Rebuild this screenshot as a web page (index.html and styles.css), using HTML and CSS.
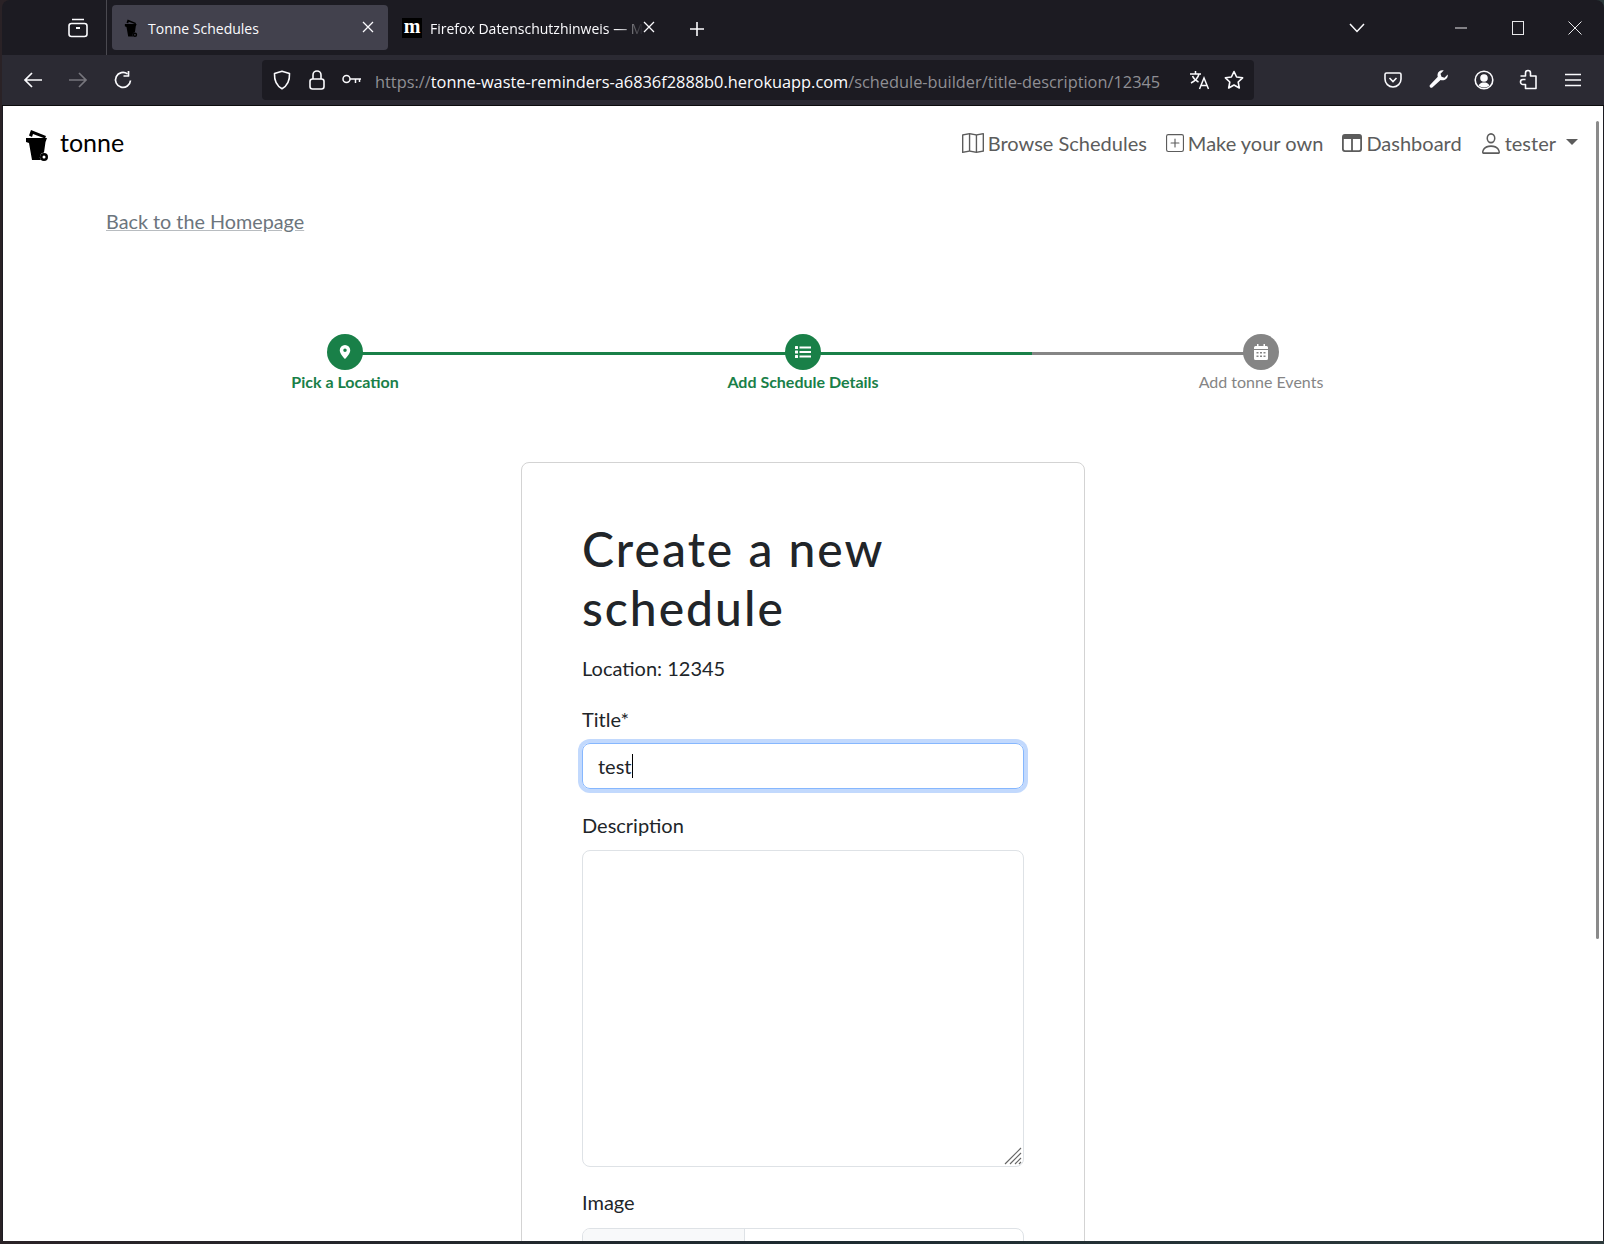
FILE: index.html
```html
<!DOCTYPE html>
<html lang="en">
<head>
  <meta charset="UTF-8">
  <title>Tonne Schedules</title>
  <link rel="stylesheet" href="styles.css">
</head>
<body>

<div class="window">

  <!-- Tab strip -->
  <div class="tabbar">
    <span class="ff-view">
      <svg width="22" height="22" viewBox="0 0 22 22" fill="none" stroke="#fbfbfe" stroke-width="1.6"><rect x="2" y="6.5" width="18" height="13" rx="2.5"/><path d="M5 2.5h12"/><path d="M9 11h4" stroke-width="2"/></svg>
    </span>
    <span class="tab-sep"></span>
    <div class="tab tab-active">
      <svg class="tab-favicon" width="16" height="18" viewBox="0 0 24 32"><use href="#bin"/></svg>
      <span class="tab-title">Tonne Schedules</span>
      <svg class="tab-close" width="12" height="12" viewBox="0 0 12 12" stroke="#fbfbfe" stroke-width="1.3"><path d="M1 1l10 10M11 1L1 11"/></svg>
    </div>
    <div class="tab tab-other">
      <span class="tab-m">m</span>
      <span class="tab-title tab-fade">Firefox Datenschutzhinweis — M</span>
      <svg class="tab-close" width="12" height="12" viewBox="0 0 12 12" stroke="#fbfbfe" stroke-width="1.3"><path d="M1 1l10 10M11 1L1 11"/></svg>
    </div>
    <svg class="new-tab" width="16" height="16" viewBox="0 0 16 16" stroke="#fbfbfe" stroke-width="1.6"><path d="M8 1v14M1 8h14"/></svg>
    <svg class="tab-list" width="16" height="10" viewBox="0 0 16 10" fill="none" stroke="#fbfbfe" stroke-width="1.5"><path d="M1 1l7 7.5L15 1"/></svg>
    <svg class="win-min" width="12" height="2" viewBox="0 0 12 2" stroke="#e8e8ea" stroke-width="1"><path d="M0 1h12"/></svg>
    <svg class="win-max" width="12" height="14" viewBox="0 0 12 14" fill="none" stroke="#e8e8ea" stroke-width="1"><rect x=".5" y=".5" width="11" height="13"/></svg>
    <svg class="win-close" width="14" height="14" viewBox="0 0 14 14" stroke="#e8e8ea" stroke-width="1"><path d="M.5.5l13 13M13.500.5l-13 13"/></svg>
  </div>

  <!-- Toolbar -->
  <div class="toolbar">
    <svg class="tb-back" width="20" height="18" viewBox="0 0 20 18" fill="none" stroke="#fbfbfe" stroke-width="1.7"><path d="M19 9H2M9 2L2 9l7 7"/></svg>
    <svg class="tb-forward" width="20" height="18" viewBox="0 0 20 18" fill="none" stroke="#77767d" stroke-width="1.7"><path d="M1 9h17M11 2l7 7-7 7"/></svg>
    <svg class="tb-reload" width="20" height="20" viewBox="0 0 20 20" fill="none" stroke="#fbfbfe" stroke-width="1.7"><path d="M17.500 10.500a7.500 7.500 0 1 1-3-6.600"/><path d="M15.500 1v5h-5" stroke-linejoin="round"/></svg>

    <div class="urlbar">
      <svg class="ub-shield" width="18" height="20" viewBox="0 0 18 20" fill="none" stroke="#fbfbfe" stroke-width="1.6"><path d="M9 1.200l7.500 2.400c.3 6.600-1.600 11.800-7.500 15.200C3.100 15.400 1.200 10.200 1.500 3.600z" stroke-linejoin="round"/></svg>
      <svg class="ub-lock" width="16" height="20" viewBox="0 0 16 20" fill="none" stroke="#fbfbfe" stroke-width="1.6"><rect x="1" y="9" width="14" height="10" rx="2.500"/><path d="M4 9V5a4 4 0 0 1 8 0v4"/></svg>
      <svg class="ub-key" width="20" height="12" viewBox="0 0 20 12" fill="none" stroke="#fbfbfe" stroke-width="1.500"><circle cx="4.500" cy="5" r="3.500"/><path d="M8 5h11M13.500 5v4M17.500 5v3"/></svg>
      <span class="url"><span class="url-dim">https://</span>tonne-waste-reminders-a6836f2888b0.herokuapp.com<span class="url-dim">/schedule-builder/title-description/12345</span></span>
      <svg class="ub-translate" width="22" height="20" viewBox="0 0 22 20" fill="none" stroke="#fbfbfe" stroke-width="1.500"><path d="M1 4h11M6.500 1v3M10 4c-1 4-4 7-8 9M3.500 6c1 2.500 3 4.500 6 6M10.500 19l4.500-11 4.500 11M12 15.500h6"/></svg>
      <svg class="ub-star" width="20" height="20" viewBox="0 0 20 20" fill="none" stroke="#fbfbfe" stroke-width="1.600"><path d="M10 1.500l2.600 5.500 6 .8-4.400 4.200 1.100 6L10 15l-5.300 3 1.100-6L1.400 7.800l6-.8z" stroke-linejoin="round"/></svg>
    </div>

    <svg class="tb-pocket" width="18" height="18" viewBox="0 0 18 18" fill="none" stroke="#fbfbfe" stroke-width="1.600"><path d="M2.500 2h13A1.500 1.500 0 0 1 17 3.500V8A8 8 0 0 1 1 8V3.500A1.500 1.500 0 0 1 2.500 2z"/><path d="M5.500 7L9 10.500 12.500 7"/></svg>
    <svg class="tb-wrench" width="20" height="20" viewBox="0 0 20 20" fill="#fbfbfe"><path d="M18.700 4.500l-3.200 3.200-3-1-1-3L14.700.5c-2.700-.8-6 1-6.200 4.200 0 .8.100 1.500.3 2.100L1 15c-1.300 1.400.8 3.800 2.300 2.500l8.300-7.500c3.300 1.300 7.900-1.200 7.100-5.500z"/></svg>
    <svg class="tb-account" width="20" height="20" viewBox="0 0 20 20" fill="none" stroke="#fbfbfe" stroke-width="1.600"><circle cx="10" cy="10" r="8.800"/><circle cx="10" cy="8" r="3" fill="#fbfbfe"/><path d="M4.500 15.500c1.500-2.500 3.500-3 5.500-3s4 .5 5.500 3c-3 2.500-8 2.500-11 0z" fill="#fbfbfe" stroke="none"/></svg>
    <svg class="tb-ext" width="20" height="21" viewBox="0 0 20 21" fill="none" stroke="#fbfbfe" stroke-width="1.600"><path d="M2 7h5V4a2.500 2.500 0 0 1 5 0v3h5.500v12.500H7v-4H4.500a2.500 2.500 0 0 1 0-5H7" stroke-linejoin="round" transform="translate(.500 0)"/></svg>
    <svg class="tb-menu" width="16" height="14" viewBox="0 0 16 14" stroke="#fbfbfe" stroke-width="1.600"><path d="M0 1.500h16M0 7h16M0 12.500h16"/></svg>
  </div>

  <!-- Page -->
  <div class="page">
    <nav class="navbar">
      <a class="brand">
        <svg class="brand-logo" width="24" height="32" viewBox="0 0 24 32"><use href="#bin"/></svg>
        <span class="brand-name">tonne</span>
      </a>
      <ul class="nav-links">
        <li>
          <svg width="22" height="20" viewBox="0 0 16 16" fill="currentColor" preserveAspectRatio="none"><path fill-rule="evenodd" d="M15.817.113A.5.5 0 0 1 16 .5v14a.5.5 0 0 1-.402.49l-5 1a.502.502 0 0 1-.196 0L5.500 15.010l-4.902.98A.5.5 0 0 1 0 15.500v-14a.5.5 0 0 1 .402-.49l5-1a.5.5 0 0 1 .196 0L10.500.990l4.902-.98a.5.5 0 0 1 .415.103zM10 1.910l-4-.8v12.980l4 .8V1.910zm1 12.980 4-.8V1.110l-4 .8v12.980zm-6-.8V1.110l-4 .8v12.980l4-.8z"/></svg>
          Browse Schedules
        </li>
        <li>
          <svg width="18" height="18" viewBox="0 0 16 16" fill="currentColor"><path d="M14 1a1 1 0 0 1 1 1v12a1 1 0 0 1-1 1H2a1 1 0 0 1-1-1V2a1 1 0 0 1 1-1h12zM2 0a2 2 0 0 0-2 2v12a2 2 0 0 0 2 2h12a2 2 0 0 0 2-2V2a2 2 0 0 0-2-2H2z"/><path d="M8 4a.5.5 0 0 1 .5.5v3h3a.5.5 0 0 1 0 1h-3v3a.5.5 0 0 1-1 0v-3h-3a.5.5 0 0 1 0-1h3v-3A.5.5 0 0 1 8 4z"/></svg>
          Make your own
        </li>
        <li>
          <svg width="20" height="18" viewBox="0 0 20 18" fill="none" stroke="currentColor" stroke-width="1.800"><rect x=".9" y=".9" width="18.200" height="16.200" rx="2"/><path d="M1 3h18" stroke-width="4"/><path d="M10 3v14"/></svg>
          Dashboard
        </li>
        <li class="nav-user">
          <svg width="18" height="21" viewBox="2 2 12 12" fill="currentColor" preserveAspectRatio="none"><path fill-rule="evenodd" d="M8 8a3 3 0 1 0 0-6 3 3 0 0 0 0 6zm2-3a2 2 0 1 1-4 0 2 2 0 0 1 4 0zm4 8c0 1-1 1-1 1H3s-1 0-1-1 1-4 6-4 6 3 6 4zm-1-.004c-.001-.246-.154-.986-.832-1.664C11.516 10.680 10.289 10 8 10c-2.290 0-3.516.680-4.168 1.332-.678.678-.830 1.418-.832 1.664h10z"/></svg>
          tester
          <span class="caret"></span>
        </li>
      </ul>
    </nav>

    <a class="back-link">Back to the Homepage</a>

    <div class="steps">
      <div class="step done">
        <span class="step-dot"><svg width="14" height="16" viewBox="0 0 16 16" fill="#fff"><path fill-rule="evenodd" d="M8 16s6-5.686 6-10A6 6 0 0 0 2 6c0 4.314 6 10 6 10zm0-8a2 2 0 1 1 0-4 2 2 0 0 1 0 4z"/></svg></span>
        <span class="step-label">Pick a Location</span>
      </div>
      <div class="step done">
        <span class="step-dot"><svg width="16" height="14" viewBox="0 0 16 14" fill="#fff"><rect x="0" y="1" width="3" height="3" rx=".5"/><rect x="0" y="5.500" width="3" height="3" rx=".5"/><rect x="0" y="10" width="3" height="3" rx=".5"/><rect x="4.500" y="1.500" width="11.500" height="2"/><rect x="4.500" y="6" width="11.500" height="2"/><rect x="4.500" y="10.500" width="11.500" height="2"/></svg></span>
        <span class="step-label">Add Schedule Details</span>
      </div>
      <div class="step">
        <span class="step-dot"><svg width="14" height="16" viewBox="0 0 14 16" fill="#fff"><path d="M3 0h1.500v2h5V0H11v2h1.500A1.500 1.500 0 0 1 14 3.500V5H0V3.500A1.500 1.500 0 0 1 1.500 2H3z"/><path fill-rule="evenodd" d="M0 6h14v8.500a1.500 1.500 0 0 1-1.500 1.500h-11A1.500 1.500 0 0 1 0 14.500zm2.500 2v1.500h2V8zm3.500 0v1.500h2V8zm3.500 0v1.500h2V8zm-7 3.500V13h2v-1.500zm3.500 0V13h2v-1.500zm3.500 0V13h2v-1.500z"/></svg></span>
        <span class="step-label">Add tonne Events</span>
      </div>
    </div>

    <div class="card">
      <h1>Create a new schedule</h1>
      <p class="location">Location: 12345</p>

      <label class="field-label">Title*</label>
      <div class="input input-focus">test<span class="cursor"></span></div>

      <label class="field-label">Description</label>
      <div class="textarea">
        <svg class="grip" width="18" height="18" viewBox="0 0 18 18" stroke="#666" stroke-width="1.200"><path d="M1 17L17 1M6 17L17 6M11 17l6-6M15 17l2-2"/></svg>
      </div>

      <label class="field-label">Image</label>
      <div class="file-input">
        <span class="file-btn"></span>
      </div>
    </div>

    <div class="scrollbar"></div>
  </div>
</div>

<svg class="defs" width="0" height="0">
  <symbol id="bin" viewBox="0 0 24 32">
    <path d="M4 6.500L6 1l15 6-1 2.500L8 5 7 8z"/>
    <path d="M1 9h21l-1.500 4-1.500 10.500a4.500 4.500 0 0 0-3 7.500H7L4 14l-3-1z"/>
    <path fill-rule="evenodd" d="M19 24a4 4 0 1 1 0 8 4 4 0 0 1 0-8zm0 2.500a1.500 1.500 0 1 0 0 3 1.500 1.500 0 0 0 0-3z"/>
  </symbol>
</svg>

</body>
</html>
```

FILE: styles.css
```css
* {
  box-sizing: border-box;
}
body {
  margin: 0;
  height: 1244px;
  overflow: hidden;
  background: linear-gradient(90deg, #2a2226, #1d2a30 50%, #2d3a3c);
  font-family: Lato, sans-serif;
}
.window {
  height: 1241px;
  margin-left: 2px;
  background: #1c1b22;
  border-radius: 8px 8px 0 0;
  overflow: hidden;
  display: flex;
  flex-direction: column;
}
.defs {
  position: absolute;
}

/* browser tabs */
.tabbar {
  height: 55px;
  flex: none;
  display: flex;
  align-items: center;
  color: #fbfbfe;
  font-family: "Open Sans", sans-serif;
  font-size: 14px;
  position: relative;
}
.ff-view {
  width: 104px;
  padding-left: 65px;
  display: flex;
  align-items: center;
}
.tab-sep {
  width: 1px;
  height: 55px;
  background: #4a4950;
  margin-right: 5px;
}
.tab {
  width: 276px;
  height: 45px;
  padding-left: 11px;
  border-radius: 4px;
  display: flex;
  align-items: center;
  position: relative;
}
.tab-active {
  background: #42414d;
}
.tab-other {
  padding-left: 14px;
}
.tab-favicon {
  fill: #000;
  margin-right: 9px;
}
.tab-m {
  width: 20px;
  height: 20px;
  background: #000;
  color: #fff;
  font-family: "Liberation Serif", serif;
  font-weight: 700;
  font-size: 20px;
  line-height: 16px;
  text-align: center;
  margin-right: 8px;
}
.tab-title {
  white-space: nowrap;
  padding-top: 2px;
}
.tab-fade {
  -webkit-mask-image: linear-gradient(90deg, #000 88%, transparent);
  mask-image: linear-gradient(90deg, #000 88%, transparent);
}
.tab-close {
  position: absolute;
  right: 14px;
  top: 16px;
}
.tab-other .tab-close {
  right: 9px;
}
.new-tab {
  margin-left: 25px;
  margin-top: 2px;
}
.tab-list {
  margin-left: 644px;
}
.win-min {
  margin-left: 90px;
}
.win-max {
  margin-left: 45px;
}
.win-close {
  margin-left: 44px;
}

/* browser toolbar */
.toolbar {
  height: 51px;
  flex: none;
  background: #2b2a33;
  border-bottom: 1px solid #0c0c0d;
  display: flex;
  align-items: center;
  padding-bottom: 1px;
}
.tb-back {
  margin-left: 21px;
}
.tb-forward {
  margin-left: 25px;
}
.tb-reload {
  margin-left: 25px;
}
.urlbar {
  width: 992px;
  height: 40px;
  margin-left: 129px;
  background: #1c1b22;
  border-radius: 4px;
  display: flex;
  align-items: center;
  padding-left: 11px;
}
.ub-lock {
  margin-left: 18px;
}
.ub-key {
  margin-left: 17px;
}
.url {
  margin-left: 13px;
  width: 799px;
  padding-top: 4px;
  white-space: nowrap;
  color: #fbfbfe;
  font-family: "Open Sans", sans-serif;
  font-size: 16.35px;
}
.url-dim {
  color: #8f8f94;
}
.ub-translate {
  margin-left: 15px;
}
.ub-star {
  margin-left: 13px;
}
.tb-pocket {
  margin-left: 130px;
}
.tb-wrench {
  margin-left: 27px;
}
.tb-account {
  margin-left: 25px;
}
.tb-ext {
  margin-left: 24px;
}
.tb-menu {
  margin-left: 27px;
}

/* the page itself */
.page {
  flex: 1;
  margin: 0 1px 0 1px;
  background: #fff;
  overflow: hidden;
  position: relative;
}
.navbar {
  display: flex;
  justify-content: space-between;
  align-items: flex-start;
  padding: 22px 25px 0 22px;
}
.brand {
  display: flex;
  align-items: flex-start;
  color: #000;
  font-size: 25px;
}
.brand-logo {
  fill: #000;
  margin-top: 1px;
  margin-right: 11px;
}
.brand-name {
  line-height: 28px;
}
.nav-links {
  list-style: none;
  margin: 0;
  padding: 3px 0 0;
  display: flex;
  gap: 19px;
  color: #5c5c5c;
  font-size: 20px;
}
.nav-links li {
  display: flex;
  align-items: center;
  gap: 4px;
}
.nav-links .nav-user {
  gap: 5px;
  margin-left: 1px;
}
.caret {
  width: 0;
  height: 0;
  margin-left: 5px;
  margin-top: -3px;
  border-top: 6px solid #5c5c5c;
  border-left: 6px solid transparent;
  border-right: 6px solid transparent;
}
.back-link {
  display: block;
  width: fit-content;
  margin: 48px 0 0 103px;
  color: #6c757d;
  font-size: 19.8px;
  text-decoration: underline;
  text-decoration-color: #b8bcc0;
}

/* stepper */
.steps {
  width: 1374px;
  margin: 101px auto 0;
  display: grid;
  grid-template-columns: repeat(3, 1fr);
}
.step {
  display: flex;
  flex-direction: column;
  align-items: center;
  position: relative;
  color: #858585;
  font-size: 16px;
}
.step.done {
  color: #198048;
  font-weight: 700;
}
.step::before,
.step::after {
  content: "";
  position: absolute;
  top: 18px;
  height: 3px;
  width: 50%;
  background: #858585;
}
.step::before {
  left: 0;
}
.step::after {
  left: 50%;
}
.step.done::before,
.step.done::after {
  background: #198048;
}
.step:first-child::before,
.step:last-child::after {
  display: none;
}
.step-dot {
  width: 36px;
  height: 36px;
  border-radius: 50%;
  background: #858585;
  display: flex;
  align-items: center;
  justify-content: center;
  position: relative;
  z-index: 1;
}
.step.done .step-dot {
  background: #198048;
}
.step-label {
  margin-top: 3px;
  line-height: 18px;
}

/* form card */
.card {
  width: 564px;
  margin: 71px auto 40px;
  padding: 56px 60px 40px;
  border: 1px solid #d3d3d3;
  border-radius: 8px;
  color: #212529;
}
h1 {
  margin: 0;
  font-family: Lato, sans-serif;
  font-size: 48px;
  font-weight: 500;
  line-height: 59px;
  letter-spacing: 2px;
}
.location {
  margin: 16px 0 21px;
  font-size: 20px;
  line-height: 30px;
}
.field-label {
  display: block;
  margin-top: 20px;
  font-size: 20px;
  line-height: 30px;
}
.input {
  height: 46px;
  margin-top: 9px;
  margin-bottom: 21px;
  padding: 0 15px;
  border: 1px solid #86b7fe;
  border-radius: 8px;
  display: flex;
  align-items: center;
  font-size: 20px;
}
.input-focus {
  box-shadow: 0 0 0 4px #c2d9fd;
}
.cursor {
  width: 1px;
  height: 24px;
  background: #000;
}
.textarea {
  height: 317px;
  margin-top: 10px;
  border: 1px solid #dee2e6;
  border-radius: 8px;
  position: relative;
}
.grip {
  position: absolute;
  right: 1px;
  bottom: 1px;
}
.file-input {
  height: 48px;
  margin-top: 11px;
  border: 1px solid #dee2e6;
  border-radius: 8px;
  overflow: hidden;
}
.file-btn {
  display: block;
  width: 162px;
  height: 100%;
  background: #f8f9fa;
  border-right: 1px solid #dee2e6;
}
.scrollbar {
  position: absolute;
  left: 1593px;
  top: 15px;
  width: 3px;
  height: 818px;
  background: #8a8a8a;
  border-radius: 2px;
}
```
